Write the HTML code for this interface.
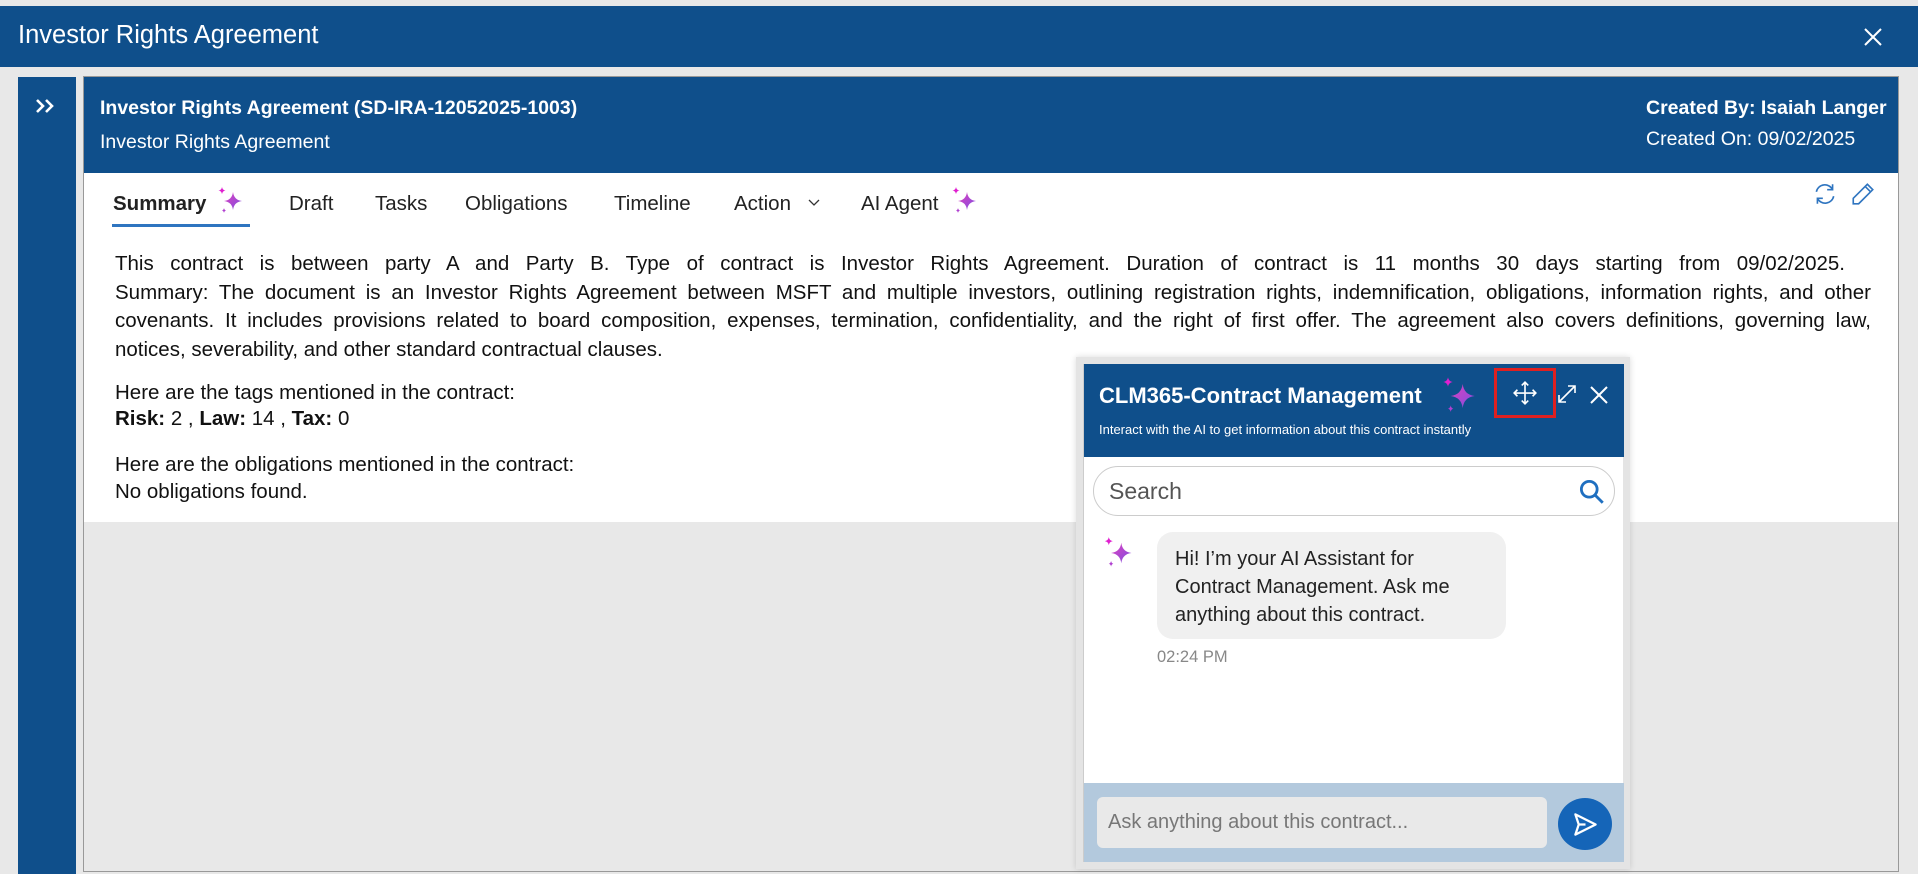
<!DOCTYPE html>
<html><head><meta charset="utf-8"><style>
*{box-sizing:border-box;margin:0;padding:0}
body{width:1918px;height:874px;background:#e8e8e8;font-family:"Liberation Sans",sans-serif;position:relative;overflow:hidden;color:#111}
.abs{position:absolute}
.top{left:0;top:6px;width:1918px;height:61px;background:#0f4f8b;color:#fff}
.side{left:18px;top:77px;width:58px;height:797px;background:#0f4f8b}
.main{left:83px;top:76px;width:1816px;height:796px;border:1px solid #999;background:#e8e8e8}
.hdr{left:0;top:0;width:1814px;height:96px;background:#0f4f8b;color:#fff}
.white{left:0;top:96px;width:1814px;height:349px;background:#fff}
.tab{top:192px;font-size:20.5px;color:#222}
.p{font-size:20.5px;line-height:28.6px;color:#111;white-space:nowrap}
.j{text-align:justify;text-align-last:justify;white-space:normal;width:1756px}
</style></head><body>
<div class="abs top"><div class="abs" style="left:18px;top:15px;font-size:25.5px">Investor Rights Agreement</div>
<svg class="abs" style="left:1864px;top:22px" width="18" height="18" viewBox="0 0 18 18"><path d="M1 1L17 17M17 1L1 17" stroke="#fff" stroke-width="2"/></svg></div>
<div class="abs side"><svg class="abs" style="left:17px;top:21px" width="22" height="16" viewBox="0 0 22 16" fill="none" stroke="#fff" stroke-width="2.6"><path d="M2 2L8 8L2 14M11 2L17 8L11 14"/></svg></div>
<div class="abs main">
 <div class="abs hdr">
  <div class="abs" style="left:16px;top:20px;font-size:19.5px;font-weight:bold">Investor Rights Agreement (SD-IRA-12052025-1003)</div>
  <div class="abs" style="left:16px;top:54px;font-size:19.5px">Investor Rights Agreement</div>
  <div class="abs" style="left:1562px;top:20px;font-size:19.5px;font-weight:bold">Created By: Isaiah Langer</div>
  <div class="abs" style="left:1562px;top:51px;font-size:19.5px">Created On: 09/02/2025</div>
 </div>
 <div class="abs white"></div>
</div>
<div class="abs tab" style="left:113px;font-weight:bold">Summary</div>
<div class="abs tab" style="left:289px">Draft</div>
<div class="abs tab" style="left:375px">Tasks</div>
<div class="abs tab" style="left:465px">Obligations</div>
<div class="abs tab" style="left:614px">Timeline</div>
<div class="abs tab" style="left:734px">Action</div>
<svg class="abs" style="left:808px;top:199px" width="12" height="8"><path d="M1 1L6 6L11 1" stroke="#333" fill="none" stroke-width="1.3"/></svg>
<div class="abs tab" style="left:861px">AI Agent</div>
<div class="abs" style="left:112px;top:224px;width:138px;height:3px;background:#2f75c0"></div>
<svg width="0" height="0" style="position:absolute"><defs><linearGradient id="g" x1="0" y1="0" x2="1" y2="1"><stop offset="0" stop-color="#e040c0"/><stop offset="1" stop-color="#7d4fe0"/></linearGradient>
<symbol id="st" viewBox="0 0 30 30"><path d="M17 6Q18 14 26 15Q18 16 17 24Q16 16 8 15Q16 14 17 6Z" fill="url(#g)"/><path d="M6 1Q6.5 4 9.5 4.5Q6.5 5 6 8Q5.5 5 2.5 4.5Q5.5 4 6 1Z" fill="#e020d0"/><path d="M8 22Q8.3 24 10 24.5Q8.3 25 8 27Q7.7 25 6 24.5Q7.7 24 8 22Z" fill="#b040d0"/></symbol></defs></svg>
<svg class="abs" style="left:216px;top:186px" width="30" height="30"><use href="#st"/></svg>
<svg class="abs" style="left:950px;top:186px" width="30" height="30"><use href="#st"/></svg>
<svg class="abs" style="left:1812px;top:181px" width="26" height="26" viewBox="0 0 24 24" fill="none" stroke="#2f75c0" stroke-width="1.5"><path d="M4 10A8 8 0 0 1 19 8M19 3V8H14M20 14A8 8 0 0 1 5 16M5 21V16H10"/></svg>
<svg class="abs" style="left:1850px;top:181px" width="26" height="26" viewBox="0 0 24 24" fill="none" stroke="#2f75c0" stroke-width="1.5"><path d="M16 3L21 8L8 21H3V16Z M14 5L19 10"/></svg>
<div class="abs p" style="left:115px;top:250px">
<div class="j" style="width:1730px">This contract is between party A and Party B. Type of contract is Investor Rights Agreement. Duration of contract is 11 months 30 days starting from 09/02/2025.</div>
<div class="j">Summary: The document is an Investor Rights Agreement between MSFT and multiple investors, outlining registration rights, indemnification, obligations, information rights, and other</div>
<div class="j">covenants. It includes provisions related to board composition, expenses, termination, confidentiality, and the right of first offer. The agreement also covers definitions, governing law,</div>
<div>notices, severability, and other standard contractual clauses.</div></div>
<div class="abs p" style="left:115px;top:380px;line-height:26px">Here are the tags mentioned in the contract:<br><b>Risk:</b> 2 , <b>Law:</b> 14 , <b>Tax:</b> 0</div>
<div class="abs p" style="left:115px;top:451px;line-height:27px">Here are the obligations mentioned in the contract:<br>No obligations found.</div>

<!-- chat -->
<div class="abs" style="left:1076px;top:357px;width:554px;height:512px;background:#e4e4e4;box-shadow:0 0 6px rgba(0,0,0,.15)"></div>
<div class="abs" style="left:1083px;top:364px;width:540px;height:498px;background:#fff;border-left:1px solid #ccc">
 <div class="abs" style="left:0;top:0;width:540px;height:93px;background:#0f4f8b;color:#fff">
  <div class="abs" style="left:15px;top:19px;font-size:22px;font-weight:bold">CLM365-Contract Management</div>
  <div class="abs" style="left:15px;top:58px;font-size:13px">Interact with the AI to get information about this contract instantly</div>
 </div>
 <div class="abs" style="left:9px;top:102px;width:522px;height:50px;border:1px solid #ccc;border-radius:25px">
  <div class="abs" style="left:15px;top:11px;font-size:23px;color:#555">Search</div>
  <svg class="abs" style="left:484px;top:11px" width="27" height="27" viewBox="0 0 24 24" fill="none" stroke="#1f6fc0" stroke-width="2.5"><circle cx="10" cy="10" r="7"/><path d="M15 15L22 22"/></svg>
 </div>
 <div class="abs" style="left:73px;top:168px;width:349px;height:107px;background:#f0f0f0;border-radius:16px;padding:13px 18px;font-size:20px;line-height:28px;color:#222">Hi! I’m your AI Assistant for Contract Management. Ask me anything about this contract.</div>
 <div class="abs" style="left:73px;top:284px;font-size:16.5px;color:#888">02:24 PM</div>
 <div class="abs" style="left:0;top:419px;width:540px;height:79px;background:#b3c9dd"></div>
 <div class="abs" style="left:13px;top:433px;width:450px;height:51px;background:#e9e9e9;border-radius:6px"><div class="abs" style="left:11px;top:14px;font-size:20px;color:#777">Ask anything about this contract...</div></div>
 <div class="abs" style="left:474px;top:434px;width:54px;height:52px;border-radius:50%;background:#1565b8"></div>
 <svg class="abs" style="left:488px;top:447px" width="27" height="27" viewBox="0 0 24 24" fill="none" stroke="#fff" stroke-width="2" stroke-linejoin="round"><path d="M3 3L21 12L3 21L6 12Z M6 12H12"/></svg>
</div>
<svg class="abs" style="left:1440px;top:376px" width="40" height="40"><use href="#st"/></svg>
<svg class="abs" style="left:1102px;top:536px" width="34" height="34"><use href="#st"/></svg>
<div class="abs" style="left:1494px;top:368px;width:62px;height:50px;border:3px solid #e02020"></div>
<svg class="abs" style="left:1512px;top:380px" width="26" height="26" viewBox="0 0 24 24" fill="none" stroke="#fff" stroke-width="1.5"><path d="M12 2V22M2 12H22M9 5L12 2L15 5M9 19L12 22L15 19M5 9L2 12L5 15M19 9L22 12L19 15"/></svg>
<svg class="abs" style="left:1557px;top:384px" width="20" height="20" viewBox="0 0 20 20" fill="none" stroke="#fff" stroke-width="1.6"><path d="M2 18L18 2M11 2H18V9M2 11V18H9"/></svg>
<svg class="abs" style="left:1590px;top:386px" width="18" height="18" viewBox="0 0 18 18"><path d="M1 1L17 17M17 1L1 17" stroke="#fff" stroke-width="2"/></svg>
</body></html>
